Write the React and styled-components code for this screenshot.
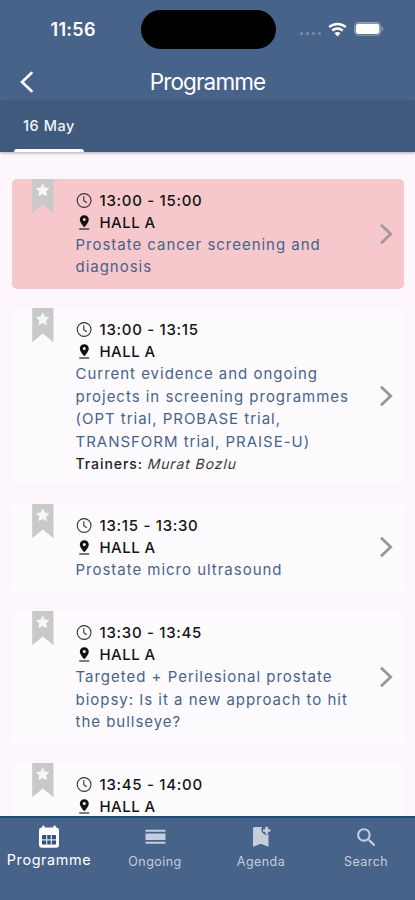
import React from "react";
import styled, { createGlobalStyle } from 'styled-components';
import { MdSearch } from 'react-icons/md';


const GlobalStyle = createGlobalStyle`
  *{
    box-sizing:border-box;
  }
  body{
    margin:0;
    background:#fdf6fd;
    font-family:Inter, "Liberation Sans", sans-serif;
  }
  p{
    margin:0;
  }
  svg{
    display:block;
    flex-shrink:0;
  }
`;

const Screen = styled.div`
  display:flex;
  flex-direction:column;
  width:415px;
  height:900px;
  overflow:hidden;
  background:#fdf6fd;
`;

const StatusBar = styled.div`
  display:grid;
  grid-template-columns:140.5px 135px 1fr;
  align-items:center;
  height:58px;
  flex-shrink:0;
  background:#486389;
  color:#fff;
`;

const Clock = styled.p`
  padding-left:50.5px;
  font-size:18px;
  font-weight:600;
  letter-spacing:0.3px;
`;

const Island = styled.div`
  height:39px;
  border-radius:20px;
  background:#000;
`;

const StatusIcons = styled.div`
  display:flex;
  align-items:center;
  padding-left:24.5px;
`;

const Dots = styled.div`
  display:flex;
  gap:2.8px;
  width:28px;
  padding-top:9px;
`;

const Dot = styled.span`
  width:3.1px;
  height:3.1px;
  border-radius:50%;
  background:#7d90ad;
`;

const Battery = styled.div`
  padding-left:7px;
`;

const Header = styled.header`
  display:grid;
  grid-template-columns:60px 1fr 60px;
  align-items:center;
  height:43px;
  flex-shrink:0;
  padding-top:5px;
  background:#486389;
  color:#fff;
`;

const BackButton = styled.button`
  display:flex;
  padding:0 0 0 20px;
  border:0;
  background:none;
  color:#fff;
`;

const Title = styled.h1`
  margin:0;
  text-align:center;
  font-size:22.5px;
  font-weight:400;
  letter-spacing:-0.85px;
  line-height:32px;
`;

const Days = styled.div`
  display:flex;
  height:51px;
  flex-shrink:0;
  padding-left:14px;
  background:#405a7d;
  box-shadow:0 1px 3px rgba(40, 50, 80, 0.4);
`;

const Day = styled.div`
  display:flex;
  flex-direction:column;
  align-items:center;
  justify-content:space-between;
  width:70px;
  padding-top:14px;
  color:#f2f5fa;
  font-size:14.5px;
  font-weight:500;
  line-height:22px;
  letter-spacing:0.55px;
  &::after{
    content:'';
    width:100%;
    height:3px;
    border-radius:3px 3px 0 0;
    background:#fff;
  }
`;

const List = styled.main`
  display:flex;
  flex-direction:column;
  flex:1;
  min-height:0;
  overflow:hidden;
  gap:19.6px;
  padding:26.6px 11px 0 11.5px;
`;

const SessionCard = styled.article`
  display:grid;
  grid-template-columns:64px 1fr 25px;
  flex-shrink:0;
  min-height:${({ $tall }) => ($tall ? '155px' : '0')};
  border-radius:5px;
  background:${({ $active }) => ($active ? '#f6c8cb' : '#fdfbfe')};
`;

const Mark = styled.div`
  padding-left:20.5px;
`;

const SessionBody = styled.div`
  padding:10.7px 0 9.8px;
`;

const InfoLine = styled.div`
  display:flex;
  align-items:center;
  gap:7px;
  height:22px;
  color:#141414;
  font-size:15px;
  font-weight:500;
  letter-spacing:${({ $spacing }) => $spacing}px;
  white-space:nowrap;
`;

const SessionTitle = styled.p`
  padding-top:0.5px;
  color:#486389;
  font-size:15px;
  line-height:22.5px;
  letter-spacing:0.98px;
  white-space:pre;
`;

const Trainers = styled.p`
  color:#222;
  font-size:14px;
  font-weight:500;
  line-height:21px;
  letter-spacing:0.93px;
`;

const TrainerName = styled.span`
  display:inline-block;
  color:#3a3a3a;
  font-weight:400;
  font-style:normal;
  letter-spacing:0.9px;
  transform:skewX(-14deg);
`;

const Arrow = styled.div`
  display:flex;
  align-items:center;
  color:${({ $active }) => ($active ? '#a0999b' : '#979797')};
`;

const TabBar = styled.nav`
  display:grid;
  grid-template-columns:98px 114px 98px 1fr;
  height:84px;
  flex-shrink:0;
  padding-top:7px;
  border-top:2px solid #204d78;
  background:#486389;
`;

const Tab = styled.div`
  display:flex;
  flex-direction:column;
  align-items:center;
  gap:${({ $active }) => ($active ? '0' : '2px')};
  padding-left:${({ $shift = 0 }) => $shift}px;
  color:${({ $active }) => ($active ? '#fff' : '#c5cedb')};
  font-size:${({ $active }) => ($active ? '14.4px' : '12.5px')};
  font-weight:400;
  line-height:21px;
  letter-spacing:${({ $active }) => ($active ? '0.6px' : '0.45px')};
`;

const TabIcon = styled.div`
  display:flex;
  align-items:center;
  height:24px;
`;

const sessions = [
  { time: '13:00 - 15:00', hall: 'HALL A', title: 'Prostate cancer screening and\ndiagnosis', active: true },
  {
    time: '13:00 - 13:15',
    hall: 'HALL A',
    title: 'Current evidence and ongoing\nprojects in screening programmes\n(OPT trial, PROBASE trial,\nTRANSFORM trial, PRAISE-U)',
    trainers: 'Murat Bozlu',
  },
  { time: '13:15 - 13:30', hall: 'HALL A', title: 'Prostate micro ultrasound' },
  { time: '13:30 - 13:45', hall: 'HALL A', title: 'Targeted + Perilesional prostate\nbiopsy: Is it a new approach to hit\nthe bullseye?' },
  { time: '13:45 - 14:00', hall: 'HALL A' },
];

const WifiIcon = () => (
  <svg width="19" height="15" viewBox="0 0 19 15" fill="none" stroke="#fff" strokeWidth="2.5">
    <path d="M1.2 5.2C5.8.8 13.2.8 17.8 5.2" />
    <path d="M4.3 8.7c3-2.8 7.4-2.8 10.4 0" />
    <path d="M9.5 14.4l-3-3.2c1.7-1.5 4.3-1.5 6 0z" fill="#fff" stroke="none" />
  </svg>
);

const BatteryIcon = () => (
  <svg width="31" height="14" viewBox="0 0 31 14">
    <rect x="0.6" y="0.6" width="26" height="12.6" rx="4" fill="none" stroke="#91a1b9" strokeWidth="1.1" />
    <rect x="1.8" y="1.7" width="23.6" height="10.4" rx="2.8" fill="#fff" />
    <path d="M27.8 4.8c2 .6 2 3.6 0 4.2z" fill="#91a1b9" />
  </svg>
);

const BookmarkIcon = () => (
  <svg width="22" height="35" viewBox="0 0 22 35">
    <path d="M.2 0h21.3v34.2L10.85 25.5.2 34.2z" fill="#c9c9c9" />
    <path d="M10.7 4.2l2.1 4.4 4.8.6-3.5 3.3.9 4.8-4.3-2.4-4.3 2.4.9-4.8-3.5-3.3 4.8-.6z" fill="#f7f5f7" />
  </svg>
);

const ClockIcon = () => (
  <svg width="17" height="17" viewBox="0 0 17 17" fill="none" stroke="#333" strokeWidth="1.1">
    <circle cx="8.1" cy="8.5" r="6.9" />
    <path d="M7.8 4.2v4.6l3 1.9" />
  </svg>
);

const PinIcon = () => (
  <svg width="17" height="17" viewBox="0 0 17 17">
    <path fillRule="evenodd" d="M8.3 1.2c-2.6 0-4.5 1.9-4.5 4.4 0 2.8 2.4 5.4 4.5 7.6 2.1-2.2 4.5-4.8 4.5-7.6 0-2.5-1.9-4.4-4.5-4.4zm0 2.8a1.5 1.5 0 1 1 0 3 1.5 1.5 0 0 1 0-3z" fill="#111" />
    <path d="M3.2 15h10" stroke="#222" strokeWidth="1.2" />
  </svg>
);

const CalendarIcon = () => (
  <svg width="20" height="24" viewBox="0 0 20 24">
    <rect x="0" y="2.6" width="20" height="20.2" rx="3" fill="currentColor" />
    <path d="M4.4 1.6v3M15.600 1.600v3" stroke="currentColor" strokeWidth="2.400" strokeLinecap="round" />
    <rect x="3" y="10" width="14" height="9.600" rx="0.800" fill="#2f527f" />
    <path d="M3 14.800h14M7.700 10v9.600M12.300 10v9.600" stroke="currentColor" strokeWidth="1.200" opacity="0.850" />
  </svg>
);

const OngoingIcon = () => (
  <svg width="21" height="16" viewBox="0 0 21 16" fill="currentColor">
    <path d="M.5 .8h20v2H.5zM.5 4.5h20v6.4H.5zM.5 12.8h20v2H.5z" />
  </svg>
);

const AgendaIcon = () => (
  <svg width="20" height="22" viewBox="0 0 20 22" fill="currentColor">
    <path d="M3.5 1h7.5a5.3 5.3 0 0 0 6.5 7.4V20.8l-7.7-3-7.8 3V2.5A1.5 1.5 0 0 1 3.5 1z" />
    <path d="M14.4 .8h2.6v2.4h2.4v2.6h-2.4v2.4h-2.6V5.8h-2.4v-2.6h2.4z" />
  </svg>
);

const Session = ({ time, hall, title, trainers, active }) => (
  <SessionCard $active={active} $tall={!title}>
    <Mark><BookmarkIcon /></Mark>
    <SessionBody>
      <InfoLine $spacing={0.7}><ClockIcon />{time}</InfoLine>
      <InfoLine $spacing={0.45}><PinIcon />{hall}</InfoLine>
      {title && <SessionTitle>{title}</SessionTitle>}
      {trainers && <Trainers>Trainers: <TrainerName>{trainers}</TrainerName></Trainers>}
    </SessionBody>
    <Arrow $active={active}>
      <svg width="15" height="22" viewBox="0 0 15 22" fill="none" stroke="currentColor" strokeWidth="2.8">
        <path d="M2 1.8L11.7 11 2 20.2" />
      </svg>
    </Arrow>
  </SessionCard>
);


const App = () => {

    return(
        <React.Fragment>
            <GlobalStyle />
            <Screen>
                <StatusBar>
                    <Clock>11:56</Clock>
                    <Island />
                    <StatusIcons>
                        <Dots><Dot /><Dot /><Dot /><Dot /></Dots>
                        <WifiIcon />
                        <Battery><BatteryIcon /></Battery>
                    </StatusIcons>
                </StatusBar>
                <Header>
                    <BackButton aria-label="Back">
                        <svg width="14" height="22" viewBox="0 0 14 22" fill="none" stroke="currentColor" strokeWidth="2.6" strokeLinecap="round">
                            <path d="M11.5 2L2 11l9.5 9" />
                        </svg>
                    </BackButton>
                    <Title>Programme</Title>
                </Header>
                <Days>
                    <Day>16 May</Day>
                </Days>
                <List>
                    {sessions.map((session) => <Session key={session.time} {...session} />)}
                </List>
                <TabBar>
                    <Tab $active><TabIcon><CalendarIcon /></TabIcon>Programme</Tab>
                    <Tab><TabIcon><OngoingIcon /></TabIcon>Ongoing</Tab>
                    <Tab><TabIcon><AgendaIcon /></TabIcon>Agenda</Tab>
                    <Tab $shift={7}><TabIcon><MdSearch size={25} /></TabIcon>Search</Tab>
                </TabBar>
            </Screen>
        </React.Fragment>
    )
}

export default App;
